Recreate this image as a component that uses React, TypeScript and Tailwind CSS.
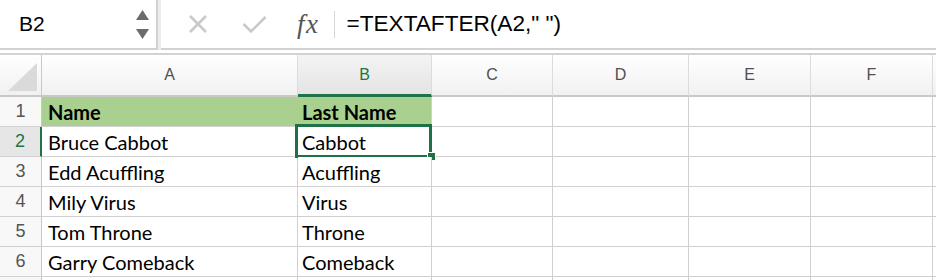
import React from 'react';

const cols = [
  { key: 'A', w: 'w-[256px]' },
  { key: 'B', w: 'w-[134px]' },
  { key: 'C', w: 'w-[121px]' },
  { key: 'D', w: 'w-[136px]' },
  { key: 'E', w: 'w-[122px]' },
  { key: 'F', w: 'w-[122px]' },
];

const rows: [string, string][] = [
  ['Name', 'Last Name'],
  ['Bruce Cabbot', 'Cabbot'],
  ['Edd Acuffling', 'Acuffling'],
  ['Mily Virus', 'Virus'],
  ['Tom Throne', 'Throne'],
  ['Garry Comeback', 'Comeback'],
  ['', ''],
];

const cellFont = { fontFamily: 'Lato, "Liberation Sans", sans-serif' };

function Toolbar() {
  return (
    <div className="flex h-[50px] bg-white">
      {/* Name box */}
      <div className="flex w-[158px] items-center justify-between border-r-2 border-b-2 border-[#d2d2d2] pl-[19px] pr-[7px]">
        <span className="text-[21px] text-black font-['Liberation_Sans',sans-serif]">B2</span>
        <div className="flex flex-col gap-[9px]">
          <svg width="13" height="10" viewBox="0 0 13 10">
            <polygon points="6.5,0 13,10 0,10" fill="#6b6b6b" />
          </svg>
          <svg width="13" height="10" viewBox="0 0 13 10">
            <polygon points="0,0 13,0 6.5,10" fill="#6b6b6b" />
          </svg>
        </div>
      </div>
      <div className="w-[3px] bg-[#ededed]" />
      {/* Formula bar */}
      <div className="flex flex-1 items-center border-b-2 border-[#d2d2d2]">
        <svg className="ml-[27px]" width="20" height="20" viewBox="0 0 20 20">
          <path d="M2 2 L18 18 M18 2 L2 18" stroke="#c9c9c9" strokeWidth="2.6" />
        </svg>
        <svg className="ml-[34px]" width="25" height="20" viewBox="0 0 25 20">
          <path d="M1.5 10 L9 17.5 L23.5 3" stroke="#c9c9c9" strokeWidth="2.6" fill="none" />
        </svg>
        <span className="ml-[30px] text-[27px] italic leading-none text-[#555] font-['Liberation_Serif',serif] tracking-[1.5px]">
          fx
        </span>
        <div className="ml-[14px] h-[27px] w-px bg-[#d6d6d6]" />
        <span className="ml-[12px] text-[22.6px] text-black font-['Liberation_Sans',sans-serif]">
          =TEXTAFTER(A2," ")
        </span>
      </div>
    </div>
  );
}

function HeaderRow() {
  return (
    <div className="flex h-[42px]">
      <div className="relative w-[42px] border-r border-b-2 border-[#c8c8c8] bg-gradient-to-b from-white to-[#f1f1f1]">
        <svg className="absolute right-[4px] bottom-[4px]" width="29" height="28" viewBox="0 0 29 28">
          <polygon points="29,0 29,28 0,28" fill="#dadada" />
        </svg>
      </div>
      {cols.map((c) => {
        const sel = c.key === 'B';
        return (
          <div
            key={c.key}
            className={`${c.w} flex items-center justify-center border-r border-[#dcdcdc] font-['Liberation_Sans',sans-serif] text-[16px] ${
              sel
                ? 'border-b-[3px] border-b-[#217346] bg-gradient-to-b from-[#f4f4f4] to-[#e4e4e4] text-[#217346]'
                : 'border-b-2 border-b-[#c8c8c8] bg-gradient-to-b from-white to-[#f1f1f1] text-[#4f4f4f]'
            }`}
          >
            {c.key}
          </div>
        );
      })}
      <div className="flex-1 border-b-2 border-[#c8c8c8] bg-gradient-to-b from-white to-[#f1f1f1]" />
    </div>
  );
}

function DataRow({ idx, a, b, last }: { idx: number; a: string; b: string; last?: boolean }) {
  const header = idx === 1;
  const selRow = idx === 2;
  return (
    <div className="flex h-[30px]">
      <div
        className={`flex w-[42px] items-center justify-center border-b border-[#d0d0d0] font-['Liberation_Sans',sans-serif] text-[18px] ${
          selRow
            ? 'border-r-2 border-r-[#217346] bg-[#e6e6e6] text-[#217346]'
            : 'border-r border-r-[#c8c8c8] bg-[#f8f8f8] text-[#555]'
        }`}
      >
        {last ? '' : idx}
      </div>
      <div
        style={cellFont}
        className={`flex w-[256px] items-center border-b border-[#d0d0d0] pl-[6px] pt-[1px] text-[20px] text-black ${
          header ? 'bg-[#a9d08e] font-bold' : 'border-r bg-white'
        }`}
      >
        {a}
      </div>
      <div
        style={cellFont}
        className={`relative flex w-[134px] items-center border-r border-b border-[#d0d0d0] pl-[4px] pt-[1px] text-[20px] text-black ${
          header ? 'bg-[#a9d08e] font-bold' : 'bg-white'
        }`}
      >
        {b}
        {selRow && (
          <>
            <div className="absolute -left-[3px] -top-[3px] h-[34px] w-[137px] border-[3px] border-[#1f7145]" />
            <div className="absolute -right-[5px] -bottom-[5px] h-[9px] w-[9px] border border-white bg-[#1f7145]" />
          </>
        )}
      </div>
      {cols.slice(2).map((c) => (
        <div key={c.key} className={`${c.w} border-r border-b border-[#d0d0d0] bg-white`} />
      ))}
      <div className="flex-1 border-b border-[#d0d0d0] bg-white" />
    </div>
  );
}

export default function App() {
  return (
    <div className="h-[280px] w-[936px] overflow-hidden bg-white">
      <Toolbar />
      <div className="h-[5px] border-b-2 border-[#d2d2d2] bg-white" />
      <HeaderRow />
      {rows.map(([a, b], i) => (
        <DataRow key={i} idx={i + 1} a={a} b={b} last={i === rows.length - 1} />
      ))}
    </div>
  );
}
